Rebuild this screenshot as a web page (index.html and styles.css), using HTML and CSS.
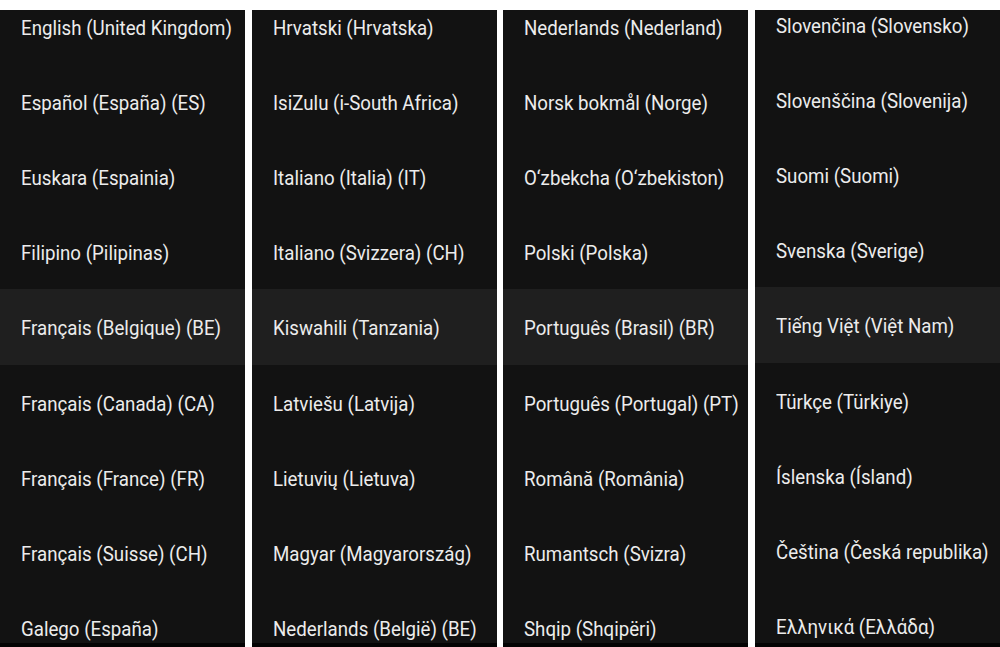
FILE: index.html
```html
<!DOCTYPE html>
<html>
<head>
<meta charset="utf-8">
<link rel="stylesheet" href="styles.css">
</head>
<body>
<div class="board">
  <div class="col">
    <ul class="list">
      <li><span>English (United Kingdom)</span></li>
      <li><span>Español (España) (ES)</span></li>
      <li><span>Euskara (Espainia)</span></li>
      <li><span>Filipino (Pilipinas)</span></li>
      <li class="sel"><span>Français (Belgique) (BE)</span></li>
      <li><span>Français (Canada) (CA)</span></li>
      <li><span>Français (France) (FR)</span></li>
      <li><span>Français (Suisse) (CH)</span></li>
      <li><span>Galego (España)</span></li>
    </ul>
  </div>
  <div class="col">
    <ul class="list">
      <li><span>Hrvatski (Hrvatska)</span></li>
      <li><span>IsiZulu (i-South Africa)</span></li>
      <li><span>Italiano (Italia) (IT)</span></li>
      <li><span>Italiano (Svizzera) (CH)</span></li>
      <li class="sel"><span>Kiswahili (Tanzania)</span></li>
      <li><span>Latviešu (Latvija)</span></li>
      <li><span>Lietuvių (Lietuva)</span></li>
      <li><span>Magyar (Magyarország)</span></li>
      <li><span>Nederlands (België) (BE)</span></li>
    </ul>
  </div>
  <div class="col">
    <ul class="list">
      <li><span>Nederlands (Nederland)</span></li>
      <li><span>Norsk bokmål (Norge)</span></li>
      <li><span>O‘zbekcha (O‘zbekiston)</span></li>
      <li><span>Polski (Polska)</span></li>
      <li class="sel"><span>Português (Brasil) (BR)</span></li>
      <li><span>Português (Portugal) (PT)</span></li>
      <li><span>Română (România)</span></li>
      <li><span>Rumantsch (Svizra)</span></li>
      <li><span>Shqip (Shqipëri)</span></li>
    </ul>
  </div>
  <div class="col">
    <ul class="list list-up">
      <li><span>Slovenčina (Slovensko)</span></li>
      <li><span>Slovenščina (Slovenija)</span></li>
      <li><span>Suomi (Suomi)</span></li>
      <li><span>Svenska (Sverige)</span></li>
      <li class="sel"><span>Tiếng Việt (Việt Nam)</span></li>
      <li><span>Türkçe (Türkiye)</span></li>
      <li><span>Íslenska (Ísland)</span></li>
      <li><span>Čeština (Česká republika)</span></li>
      <li><span>Ελληνικά (Ελλάδα)</span></li>
    </ul>
  </div>
</div>
</body>
</html>
```

FILE: styles.css
```css
html, body {
  margin: 0;
  padding: 0;
  background: #ffffff;
}
.board {
  display: flex;
  justify-content: space-between;
  padding-top: 10px;
  width: 1000px;
  height: 647px;
  box-sizing: border-box;
}
.col {
  width: 245px;
  height: 637px;
  background: #121212;
  overflow: hidden;
  border-bottom: 4px solid #030303;
  box-sizing: border-box;
}
.list {
  list-style: none;
  margin: -21px 0 0 0;
  padding: 0;
}
.list-up {
  margin-top: -23px;
}
.list li {
  height: 75px;
  display: flex;
  align-items: center;
  padding-left: 21px;
  padding-top: 2px;
  font-family: Roboto, "Noto Sans", sans-serif;
  font-size: 20px;
  color: #ececec;
  white-space: nowrap;
  box-sizing: border-box;
}
.list li span {
  display: inline-block;
  transform: scaleX(0.935);
  transform-origin: left center;
}
.list li.sel {
  background: #1f1f1f;
  height: 76px;
}
```
